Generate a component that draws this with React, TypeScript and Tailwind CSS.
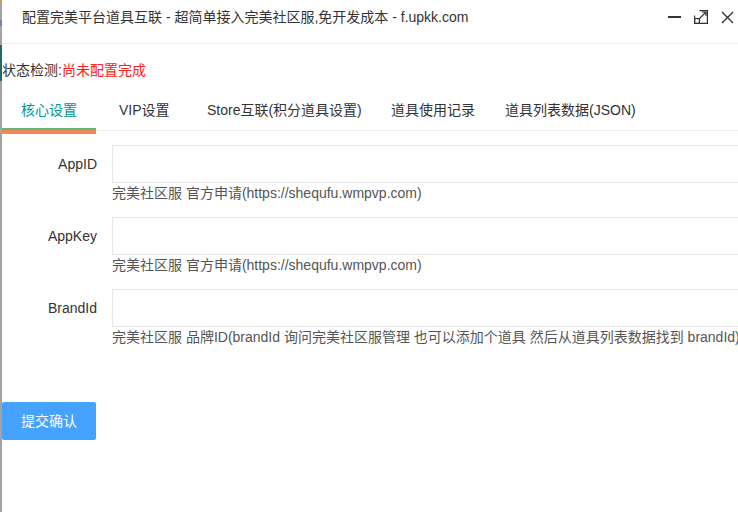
import React from "react";

const font = { fontFamily: '"Liberation Sans", Arial, "Noto Sans CJK SC", sans-serif' };

function Field({ label, help }: { label: string; help: string }) {
  return (
    <div className="flex mb-[15px]">
      <div className="w-[110px] shrink-0 pr-[15px] h-[38px] leading-[38px] text-right text-[14px] text-[#333]">
        {label}
      </div>
      <div className="flex flex-col">
        <div className="w-[700px] h-[38px] border border-[#e6e6e6] bg-white" />
        <div className="whitespace-nowrap text-[14px] leading-[17px] pt-[2px] text-[#555]">{help}</div>
      </div>
    </div>
  );
}

export default function App() {
  return (
    <div className="flex w-[738px] h-[512px] overflow-hidden bg-white" style={font}>
      <div className="w-[2px] shrink-0 flex flex-col bg-[#a3a3a3]">
        <div className="h-[4px] bg-[#c9a24a]" />
        <div className="h-[16px]" />
        <div className="h-[6px] bg-[#6b86b3]" />
        <div className="h-[19px]" />
        <div className="h-[36px] bg-[#1f6b66]" />
      </div>
      <div className="flex-1 flex flex-col min-w-0 overflow-hidden">
        <div className="h-[44px] shrink-0 border-b border-[#eeeeee] flex items-start pt-[7px] pl-[20px] pr-[4px]">
          <div className="flex-1 text-[14px] leading-[20px] text-[#333] whitespace-nowrap">
            配置完美平台道具互联 - 超简单接入完美社区服,免开发成本 - f.upkk.com
          </div>
          <div className="flex items-center gap-[13px] h-[20px]">
            <svg width="13" height="14" viewBox="0 0 13 14">
              <rect x="0" y="6" width="13" height="2" fill="#333" />
            </svg>
            <svg width="14" height="14" viewBox="0 0 14 14" fill="none" stroke="#333" strokeWidth="1.2">
              <path d="M5.5 0.6 H13.4 V13.4 H0.6 V5.5" />
              <rect x="0.6" y="8.6" width="4.8" height="4.8" />
              <path d="M5.5 8.5 L12 2 M8 2 H12 V6" />
            </svg>
            <svg width="13" height="13" viewBox="0 0 13 13" stroke="#333" strokeWidth="1.4">
              <path d="M1 1 L12 12 M12 1 L1 12" />
            </svg>
          </div>
        </div>
        <div className="h-[46px] shrink-0 flex items-center pt-[6px] text-[14px] whitespace-nowrap">
          <span className="text-[#333]">状态检测:</span>
          <span className="text-[#ff2020]">尚未配置完成</span>
        </div>
        <div className="relative h-[41px] shrink-0 flex items-start border-b border-[#eeeeee] text-[14px] leading-[40px] text-[#333] whitespace-nowrap">
          <div className="relative w-[94px] text-center text-[#009688] h-[40px]">
            核心设置
            <div className="absolute left-0 right-0 bottom-0 h-[2px] bg-[#5fb878]" />
            <div className="absolute left-0 right-0 bottom-[-4px] h-[4px] bg-[#f5865a]" />
          </div>
          <div className="w-[23px]" />
          <div className="w-[88px]">VIP设置</div>
          <div className="w-[184px]">Store互联(积分道具设置)</div>
          <div className="w-[114px]">道具使用记录</div>
          <div>道具列表数据(JSON)</div>
        </div>
        <div className="pt-[14px]">
          <Field label="AppID" help="完美社区服 官方申请(https://shequfu.wmpvp.com)" />
          <Field label="AppKey" help="完美社区服 官方申请(https://shequfu.wmpvp.com)" />
          <Field label="BrandId" help="完美社区服 品牌ID(brandId 询问完美社区服管理 也可以添加个道具 然后从道具列表数据找到 brandId)" />
          <button className="mt-[41px] w-[94px] h-[38px] rounded-[2px] bg-[#46a2ff] text-white text-[14px]">
            提交确认
          </button>
        </div>
      </div>
    </div>
  );
}
